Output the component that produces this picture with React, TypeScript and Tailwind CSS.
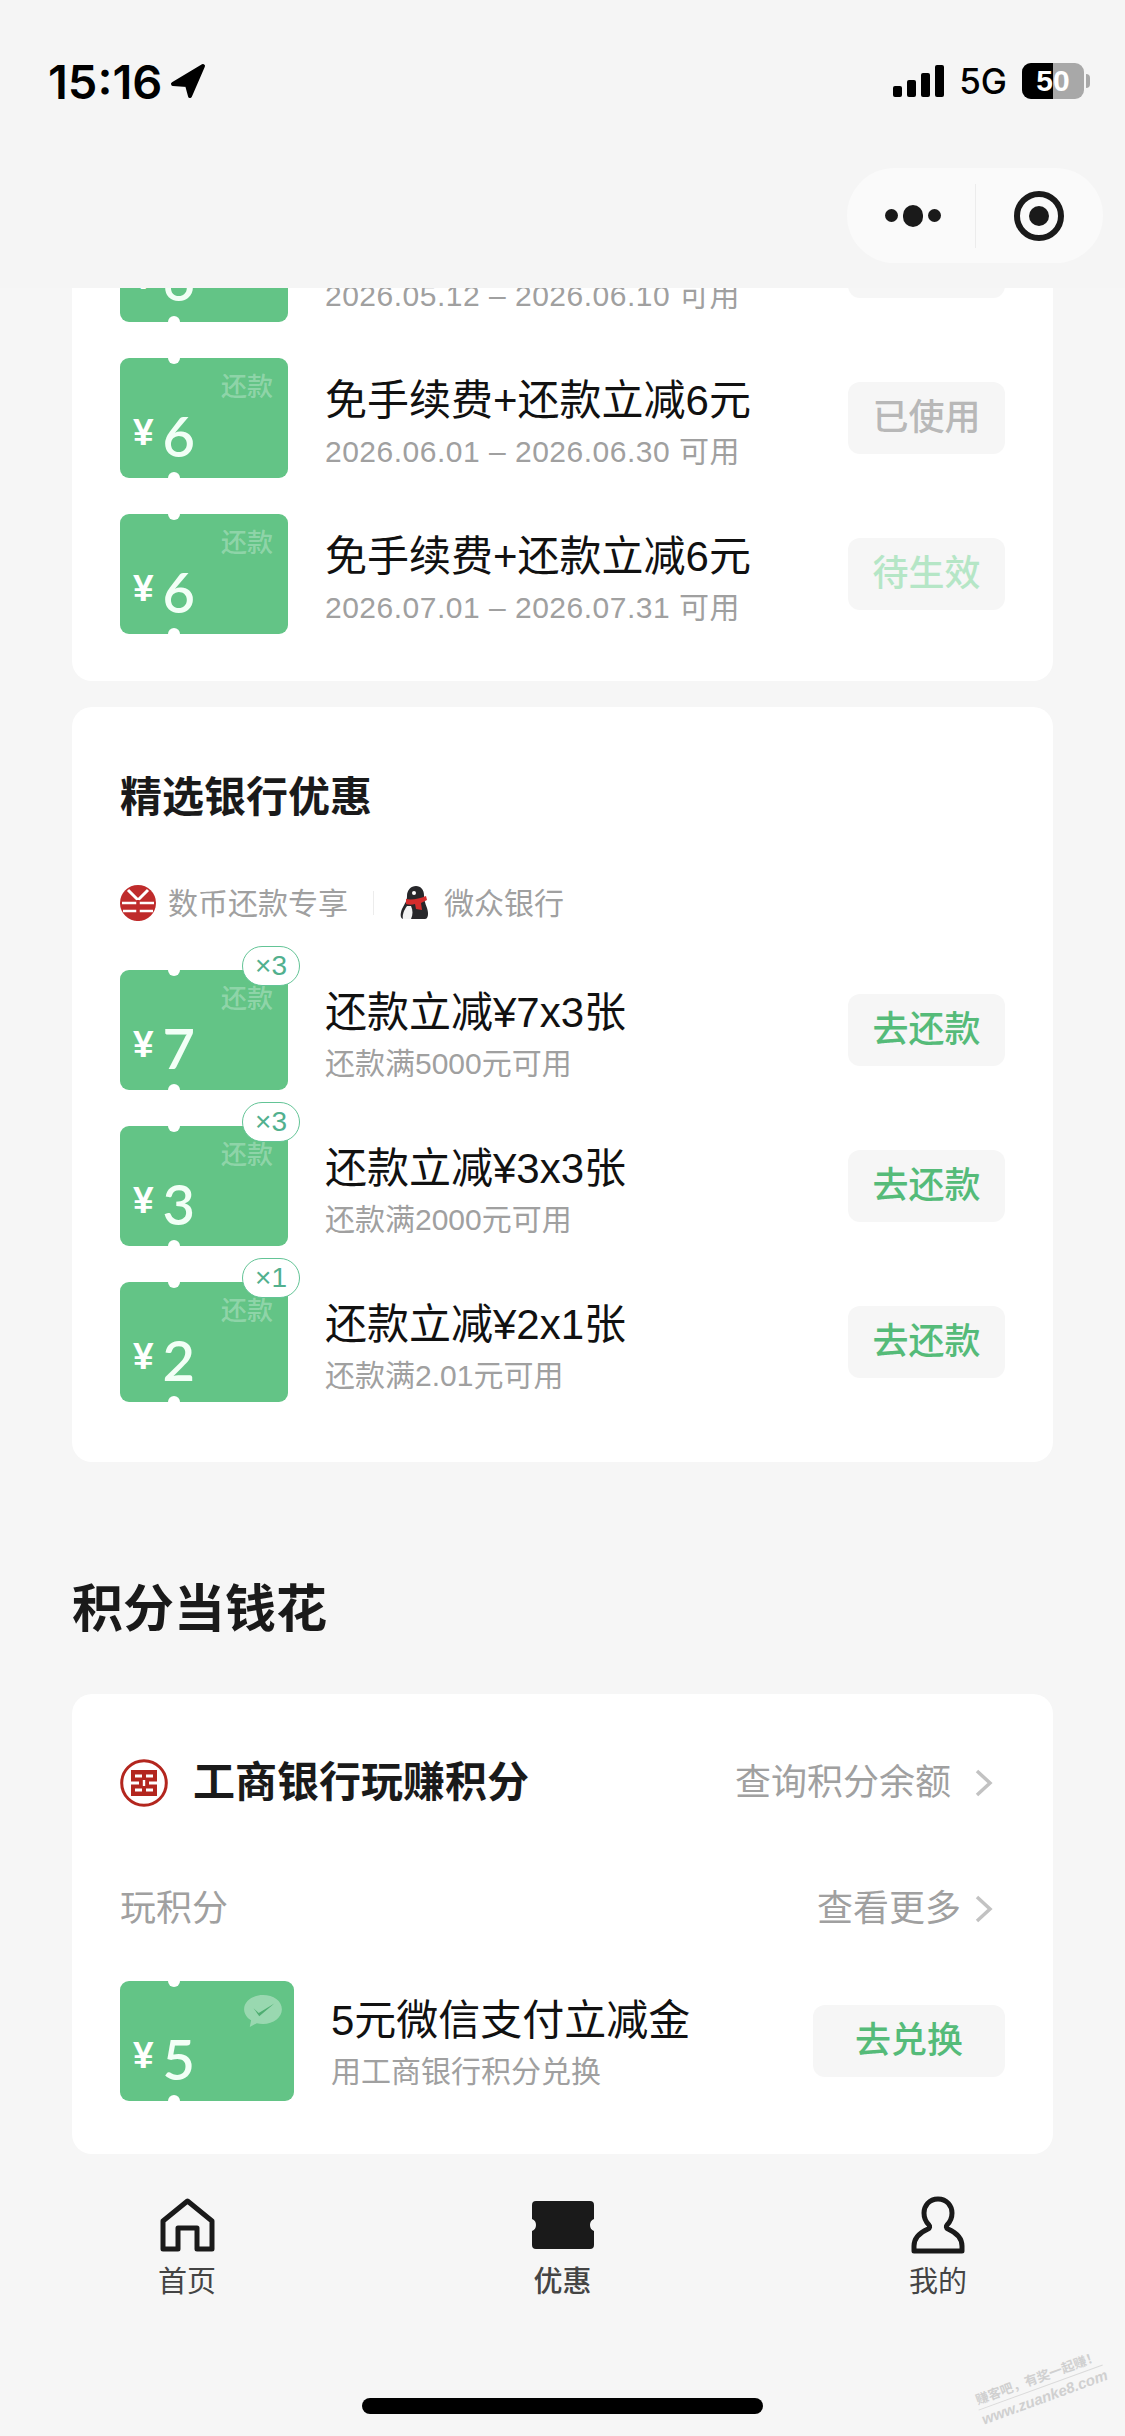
import type { ReactNode } from "react";

const CJK = "font-['Liberation_Sans','Noto_Sans_CJK_SC',sans-serif]";

interface TicketProps {
  amount: number;
  wide?: boolean;
  count?: number;
  wechat?: boolean;
}

function WechatMark() {
  return (
    <svg viewBox="0 0 40 36" className="absolute right-[12px] top-[14px] w-[38px] h-[34px]">
      <path d="M20 0C9 0 0 6.600 0 15c0 4.800 3 9 7.400 11.800L6 34l7.400-4.200c2.100.5 4.300.8 6.600.8 11 0 20-7 20-15.600S31 0 20 0z" fill="#ffffff" fillOpacity="0.35" />
      <path d="M10 14l5.500 5L32 9l-16 13.500z" fill="#4fae72" />
    </svg>
  );
}

function Ticket({ amount, wide, count, wechat }: TicketProps) {
  return (
    <div className={`relative shrink-0 h-[120px] rounded-[9px] bg-[#63c486] ${wide ? "w-[174px]" : "w-[168px]"}`}>
      <span className="absolute left-[48px] -top-[6px] w-[12px] h-[12px] rounded-full bg-white" />
      <span className="absolute left-[48px] -bottom-[6px] w-[12px] h-[12px] rounded-full bg-white" />
      {wechat ? (
        <WechatMark />
      ) : (
        <span className="absolute right-[15px] top-[13px] text-[26px] leading-[32px] font-medium text-white/30">还款</span>
      )}
      <div className="absolute left-[13px] bottom-[14px] flex items-center gap-[9px] text-white">
        <span className="text-[37px] leading-[34px] font-bold -mt-[6px]">¥</span>
        <span className="font-['Lato',sans-serif] text-[56px] leading-[56px] font-semibold text-[#f2fff6]">{amount}</span>
      </div>
      {count !== undefined && (
        <span className="absolute -right-[12px] -top-[24px] flex items-center justify-center w-[58px] h-[40px] rounded-[20px] border border-[#63c496] bg-white text-[28px] leading-none text-[#52b08e]">
          ×{count}
        </span>
      )}
    </div>
  );
}

interface ActionProps {
  label: string;
  color: string;
  wide?: boolean;
}

function ActionButton({ label, color, wide }: ActionProps) {
  return (
    <button className={`shrink-0 h-[72px] rounded-[12px] bg-[#f6f6f6] text-[36px] font-medium ${wide ? "w-[192px]" : "w-[157px]"} ${color}`}>
      {label}
    </button>
  );
}

interface CouponRowProps extends TicketProps {
  title: string;
  note: string;
  dated?: boolean;
  action: string;
  actionColor: string;
}

function CouponRow({ title, note, dated, action, actionColor, ...ticket }: CouponRowProps) {
  return (
    <div className="flex items-center">
      <Ticket {...ticket} />
      <div className={`flex-1 min-w-0 ml-[37px] ${ticket.wide ? "pt-[7px]" : "pt-[12px]"}`}>
        <p className="text-[42px] leading-[52px] text-[#111111] -mt-[2px]">{title}</p>
        <p className={`text-[30px] leading-[40px] text-[#a0a0a0] mt-[5px] ${dated ? "tracking-[0.5px]" : ""}`}>{note}</p>
      </div>
      <ActionButton label={action} color={actionColor} wide={ticket.wide} />
    </div>
  );
}

function EcnyLogo() {
  return (
    <svg viewBox="0 0 36 36" className="w-[36px] h-[36px]">
      <circle cx="18" cy="18" r="18" fill="#bf2b2b" />
      <path d="M8 5l10 10 10-10" stroke="#ffffff" strokeWidth="3" fill="none" />
      <path d="M2 18h32M3 26h30" stroke="#ffffff" strokeWidth="2.500" fill="none" />
      <path d="M18 15v21" stroke="#bf2b2b" strokeWidth="3.500" fill="none" />
    </svg>
  );
}

function PenguinLogo() {
  return (
    <svg viewBox="0 0 30 36" className="w-[30px] h-[36px]">
      <path d="M17 1c5 0 8 4 8 9 0 4 1 8 3 13 2 6 1 11-2 11H5c-4 0-4-5-2-10 3-6 5-8 5-13C8 5 12 1 17 1z" fill="#27272a" />
      <path d="M8 21c-3 4-5 9-4 13h8c2-4 2-9 0-13z" fill="#f3f3f3" />
      <circle cx="15" cy="8" r="2" fill="#ffffff" />
      <path d="M7 14c6 1 13 0 20-3l1 4-6 3 1 7-6-1-1-5c-3 1-6 1-9 0z" fill="#d42c2c" />
    </svg>
  );
}

function IcbcLogo() {
  return (
    <svg viewBox="0 0 48 48" className="w-[48px] h-[48px] shrink-0">
      <circle cx="24" cy="24" r="22.300" fill="none" stroke="#b3261e" strokeWidth="3" />
      <rect x="11" y="11" width="26" height="26" fill="#b3261e" />
      <path d="M15 15.500h7v3h-7zM26 15.500h7v3h-7zM15 29.500h7v3h-7zM26 29.500h7v3h-7zM11 22.500h8v3h-8zM29 22.500h8v3h-8zM22.800 21h2.400v6h-2.400z" fill="#ffffff" />
    </svg>
  );
}

function Chevron() {
  return (
    <svg viewBox="0 0 18 28" className="w-[18px] h-[28px] shrink-0">
      <path d="M2 2l13 12L2 26" fill="none" stroke="#c2c2c2" strokeWidth="3.500" />
    </svg>
  );
}

function StatusBar() {
  return (
    <div className="flex items-center justify-between h-[162px] pl-[48px] pr-[35px]">
      <div className="flex items-center gap-[8px]">
        <span className="font-['Inter',sans-serif] text-[47px] leading-none font-semibold text-black">15:16</span>
        <svg viewBox="0 0 36 36" className="w-[36px] h-[36px]">
          <path d="M33 3L3 21l14 1 3 11z" fill="#000000" stroke="#000000" strokeWidth="4" strokeLinejoin="round" />
        </svg>
      </div>
      <div className="flex items-center">
        <div className="flex items-end gap-[5px] h-[32px]">
          <span className="w-[9px] h-[11px] rounded-[2px] bg-black" />
          <span className="w-[9px] h-[17px] rounded-[2px] bg-black" />
          <span className="w-[9px] h-[24px] rounded-[2px] bg-black" />
          <span className="w-[9px] h-[32px] rounded-[2px] bg-black" />
        </div>
        <span className="ml-[15px] font-['Inter',sans-serif] text-[35px] leading-none font-medium text-black">5G</span>
        <div className="relative flex ml-[15px] w-[62px] h-[36px] rounded-[9px] overflow-hidden bg-[#a8a8a8]">
          <span className="w-[31px] bg-black" />
          <span className="absolute inset-0 flex items-center justify-center text-[30px] leading-none font-bold text-white">50</span>
        </div>
        <span className="ml-[2px] w-[4px] h-[14px] rounded-r-full bg-[#a8a8a8]" />
      </div>
    </div>
  );
}

function Capsule() {
  return (
    <div className="flex justify-end pr-[22px] h-[126px]">
      <div className="flex items-center w-[256px] h-[95px] mt-[6px] rounded-[48px] bg-[#fafafa]">
        <div className="flex items-center justify-center gap-[5px] w-[128px] h-full pl-[4px]">
          <span className="w-[13px] h-[13px] rounded-full bg-[#1a1a1a]" />
          <span className="w-[20px] h-[22px] rounded-full bg-[#1a1a1a]" />
          <span className="w-[13px] h-[13px] rounded-full bg-[#1a1a1a]" />
        </div>
        <span className="w-px h-[64px] bg-[#ececec]" />
        <div className="flex items-center justify-center flex-1 h-full pr-[2px]">
          <span className="flex items-center justify-center w-[50px] h-[50px] rounded-full border-[6px] border-[#1a1a1a]">
            <span className="w-[20px] h-[20px] rounded-full bg-[#1a1a1a]" />
          </span>
        </div>
      </div>
    </div>
  );
}

function NavItem({ label, active, children }: { label: string; active?: boolean; children: ReactNode }) {
  return (
    <div className="flex flex-col items-center w-[60px]">
      <div className="flex items-center justify-center h-[60px]">{children}</div>
      <span className={`mt-[7px] text-[29px] leading-[40px] text-[#444444] ${active ? "font-medium" : ""}`}>{label}</span>
    </div>
  );
}

function NavBar() {
  return (
    <nav className="relative shrink-0 h-[281px] bg-[#f6f6f6]">
      <div className="flex justify-between px-[157px] pt-[40px]">
        <NavItem label="首页">
          <svg viewBox="0 0 55 54" className="w-[55px] h-[54px]">
            <path d="M27.500 3L3 23v28h15V30h19v21h15V23z" fill="none" stroke="#1a1a1a" strokeWidth="5" strokeLinejoin="round" />
          </svg>
        </NavItem>
        <NavItem label="优惠" active>
          <svg viewBox="0 0 62 48" className="w-[62px] h-[48px]">
            <path d="M4 0h54a4 4 0 0 1 4 4v14a6.500 6.500 0 0 0 0 12v14a4 4 0 0 1-4 4H4a4 4 0 0 1-4-4V30a6.500 6.500 0 0 0 0-12V4a4 4 0 0 1 4-4z" fill="#1a1a1a" />
          </svg>
        </NavItem>
        <NavItem label="我的">
          <svg viewBox="0 0 54 58" className="w-[54px] h-[58px]">
            <path d="M27 3c-9 0-14 7-14 14 0 6 2 9 5 12 1 1 1 3-1 4C8 37 3 42 3 50v5h48v-5c0-8-5-13-14-17-2-1-2-3-1-4 3-3 5-6 5-12 0-7-5-14-14-14z" fill="none" stroke="#1a1a1a" strokeWidth="5" strokeLinejoin="round" />
          </svg>
        </NavItem>
      </div>
      <div className="absolute left-[362px] bottom-[22px] w-[401px] h-[16px] rounded-full bg-black" />
    </nav>
  );
}

export default function App() {
  const green = "text-[#55bb79]";

  return (
    <div className={`relative flex flex-col w-[1125px] h-[2436px] overflow-hidden bg-[#f6f6f6] ${CJK}`}>
      <header className="relative z-10 shrink-0 bg-[#f5f5f5]">
        <StatusBar />
        <Capsule />
      </header>

      <main className="flex-1 min-h-0 overflow-hidden px-[72px]">
        {/* list is scrolled 126px under the header */}
        <section className="-mt-[126px] rounded-[20px] bg-white pt-[40px] pb-[47px] px-[48px] flex flex-col gap-[36px]">
          <CouponRow amount={6} dated title="免手续费+还款立减6元" note="2026.05.12 – 2026.06.10 可用" action="已使用" actionColor="text-[#b8b8b8]" />
          <CouponRow amount={6} dated title="免手续费+还款立减6元" note="2026.06.01 – 2026.06.30 可用" action="已使用" actionColor="text-[#b8b8b8]" />
          <CouponRow amount={6} dated title="免手续费+还款立减6元" note="2026.07.01 – 2026.07.31 可用" action="待生效" actionColor="text-[#b5e6c6]" />
        </section>

        <section className="mt-[26px] rounded-[20px] bg-white pt-[62px] pb-[60px] px-[48px]">
          <h2 className="text-[42px] leading-[58px] font-bold text-[#1a1a1a]">精选银行优惠</h2>
          <div className="flex items-center h-[40px] mt-[56px] text-[30px] text-[#a0a0a0]">
            <EcnyLogo />
            <span className="ml-[12px]">数币还款专享</span>
            <span className="w-px h-[24px] mx-[25px] bg-[#ececec]" />
            <PenguinLogo />
            <span className="ml-[15px]">微众银行</span>
          </div>
          <div className="flex flex-col gap-[36px] mt-[47px]">
            <CouponRow amount={7} count={3} title="还款立减¥7x3张" note="还款满5000元可用" action="去还款" actionColor={green} />
            <CouponRow amount={3} count={3} title="还款立减¥3x3张" note="还款满2000元可用" action="去还款" actionColor={green} />
            <CouponRow amount={2} count={1} title="还款立减¥2x1张" note="还款满2.01元可用" action="去还款" actionColor={green} />
          </div>
        </section>

        <h2 className="mt-[118px] text-[51px] leading-[60px] font-bold text-[#1a1a1a]">积分当钱花</h2>

        <section className="mt-[54px] h-[460px] rounded-[20px] bg-white pt-[59px] px-[48px]">
          <div className="flex items-center h-[60px] pr-[12px]">
            <IcbcLogo />
            <h3 className="ml-[25px] flex-1 text-[42px] leading-[60px] font-bold text-[#1a1a1a]">工商银行玩赚积分</h3>
            <span className="text-[36px] text-[#a0a0a0]">查询积分余额</span>
            <span className="ml-[24px]"><Chevron /></span>
          </div>
          <div className="flex items-center h-[50px] mt-[71px] pr-[12px]">
            <span className="flex-1 text-[36px] text-[#a0a0a0]">玩积分</span>
            <span className="text-[36px] text-[#a0a0a0]">查看更多</span>
            <span className="ml-[14px]"><Chevron /></span>
          </div>
          <div className="mt-[47px]">
            <CouponRow amount={5} wide wechat title="5元微信支付立减金" note="用工商银行积分兑换" action="去兑换" actionColor={green} />
          </div>
        </section>
      </main>

      <NavBar />

      <div className="absolute right-[18px] bottom-[28px] w-[132px] -rotate-[20deg] text-center font-bold text-[#d0d0d0]">
        <p className="text-[13px] leading-[18px] border-b border-[#dadada]">赚客吧，有奖一起赚！</p>
        <p className="text-[15px] leading-[20px] italic">www.zuanke8.com</p>
      </div>
    </div>
  );
}
